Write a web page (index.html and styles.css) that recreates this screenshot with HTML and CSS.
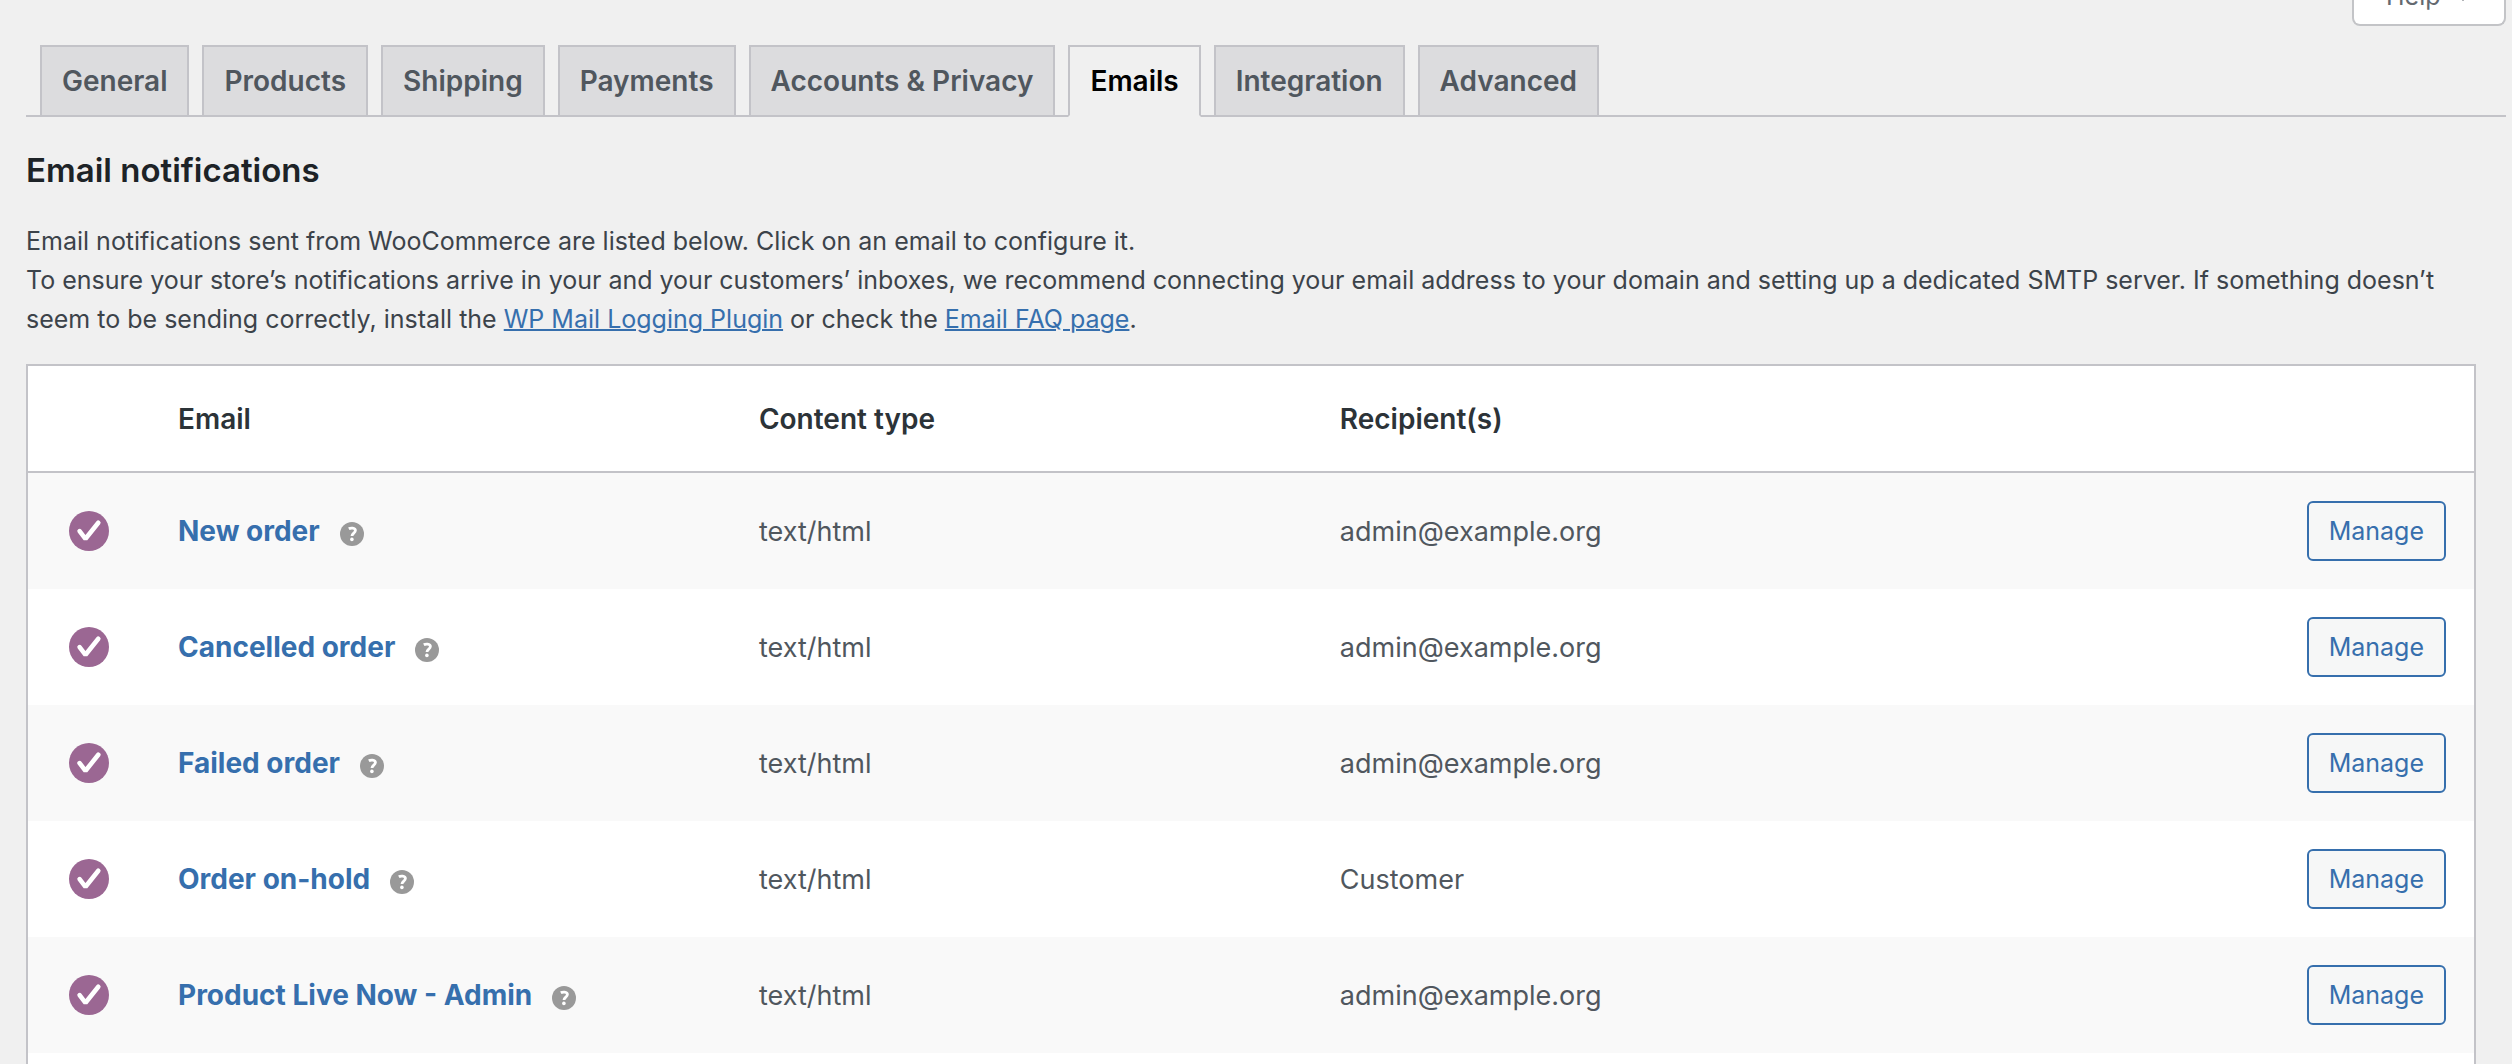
FILE: index.html
```html
<!DOCTYPE html>
<html lang="en">
<head>
<meta charset="utf-8">
<meta name="viewport" content="width=device-width, initial-scale=1">
<title>Email notifications</title>
<link rel="stylesheet" href="styles.css">
</head>
<body>
<svg class="sprite" aria-hidden="true">
  <symbol id="check" viewBox="0 0 40 40">
    <circle cx="20" cy="20" r="20" fill="#9b6793"/>
    <path d="M10.600 20.600 L16.500 28.300 L29.300 12.200" transform="translate(0 -0.500)" fill="none" stroke="currentColor" stroke-width="4.600" stroke-linecap="round" stroke-linejoin="bevel"/>
  </symbol>
  <symbol id="tip" viewBox="0 0 24 24">
    <circle cx="12" cy="12" r="12" fill="#999"/>
    <path d="M8.800 6.700 C10.200 5.900 15.400 5.300 15.400 8.500 C15.400 11 12 11.200 12 14" fill="none" stroke="currentColor" stroke-width="2.800"/>
    <circle cx="11.900" cy="17.400" r="1.800" fill="currentColor"/>
  </symbol>
</svg>

<header class="screen-meta">
  <button type="button" class="help-toggle">Help
    <svg class="arrow" viewBox="0 0 12 6" aria-hidden="true"><path d="M0 0h12L6 6z" fill="currentColor"/></svg>
  </button>
</header>

<main class="page">
  <nav class="tabs" aria-label="Settings sections">
    <a class="tab" href="#general">General</a>
    <a class="tab" href="#products">Products</a>
    <a class="tab" href="#shipping">Shipping</a>
    <a class="tab" href="#payments">Payments</a>
    <a class="tab" href="#accounts">Accounts &amp; Privacy</a>
    <a class="tab tab-active" href="#emails" aria-current="page">Emails</a>
    <a class="tab" href="#integration">Integration</a>
    <a class="tab" href="#advanced">Advanced</a>
  </nav>

  <h2 class="title">Email notifications</h2>
  <p class="intro">Email notifications sent from WooCommerce are listed below. Click on an email to configure it.<br>To ensure your store’s notifications arrive in your and your customers’ inboxes, we recommend connecting your email address to your domain and setting up a dedicated SMTP server. If something doesn’t seem to be sending correctly, install the <a href="#logging">WP Mail Logging Plugin</a> or check the <a href="#faq">Email FAQ page</a>.</p>

  <table class="emails">
    <thead>
      <tr><th class="status"></th><th class="col">Email</th><th class="col">Content type</th><th class="col">Recipient(s)</th><th></th></tr>
    </thead>
    <tbody>
      <tr>
        <td class="status"><svg class="check" role="img" aria-label="Enabled"><use href="#check"/></svg></td>
        <td><div class="name"><a href="#new-order">New order</a><svg class="tip" aria-hidden="true"><use href="#tip"/></svg></div></td>
        <td>text/html</td><td>admin@example.org</td>
        <td class="actions"><a class="manage" href="#new-order">Manage</a></td>
      </tr>
      <tr>
        <td class="status"><svg class="check" role="img" aria-label="Enabled"><use href="#check"/></svg></td>
        <td><div class="name"><a href="#cancelled-order">Cancelled order</a><svg class="tip" aria-hidden="true"><use href="#tip"/></svg></div></td>
        <td>text/html</td><td>admin@example.org</td>
        <td class="actions"><a class="manage" href="#cancelled-order">Manage</a></td>
      </tr>
      <tr>
        <td class="status"><svg class="check" role="img" aria-label="Enabled"><use href="#check"/></svg></td>
        <td><div class="name"><a href="#failed-order">Failed order</a><svg class="tip" aria-hidden="true"><use href="#tip"/></svg></div></td>
        <td>text/html</td><td>admin@example.org</td>
        <td class="actions"><a class="manage" href="#failed-order">Manage</a></td>
      </tr>
      <tr>
        <td class="status"><svg class="check" role="img" aria-label="Enabled"><use href="#check"/></svg></td>
        <td><div class="name"><a href="#on-hold">Order on-hold</a><svg class="tip" aria-hidden="true"><use href="#tip"/></svg></div></td>
        <td>text/html</td><td>Customer</td>
        <td class="actions"><a class="manage" href="#on-hold">Manage</a></td>
      </tr>
      <tr>
        <td class="status"><svg class="check" role="img" aria-label="Enabled"><use href="#check"/></svg></td>
        <td><div class="name"><a href="#live-now">Product Live Now - Admin</a><svg class="tip" aria-hidden="true"><use href="#tip"/></svg></div></td>
        <td>text/html</td><td>admin@example.org</td>
        <td class="actions"><a class="manage" href="#live-now">Manage</a></td>
      </tr>
    </tbody>
  </table>
</main>
</body>
</html>
```
FILE: styles.css
```css
* { box-sizing: border-box; }

body {
  margin: 0;
  background: #f0f0f0;
  color: #3c434a;
  font-family: Inter, "Liberation Sans", sans-serif;
  font-size: 25px;
  line-height: 39px;
}

a { color: #366fad; }

.sprite { display: none; }

/* The help tab hangs from above the top edge */
.screen-meta {
  display: flex;
  justify-content: flex-end;
  align-items: flex-end;
  height: 26px;
  padding-right: 6px;
}

.help-toggle {
  display: flex;
  flex-shrink: 0;
  align-items: center;
  gap: 16px;
  width: 154px;
  height: 60px;
  padding: 2px 0 0 32px;
  border: 2px solid #c3c4c7;
  border-top: 0;
  border-radius: 0 0 8px 8px;
  background: #fff;
  color: #646970;
  font: inherit;
}

.arrow { width: 12px; height: 6px; margin-top: 4px; }

.page { padding: 19px 6px 0 26px; }

.tabs {
  display: flex;
  gap: 13px;
  padding-left: 14px;
  border-bottom: 2px solid #c3c3c8;
}

.tab {
  padding: 10px 20px;
  border: 2px solid #c3c3c8;
  border-bottom: 0;
  background: #dcdcde;
  color: #50575e;
  font-size: 28px;
  font-weight: 600;
  line-height: 48px;
  text-decoration: none;
  white-space: nowrap;
}

.tab-active {
  margin-bottom: -2px;
  border-bottom: 2px solid #f0f0f0;
  background: #f0f0f0;
  color: #000;
}

.title {
  margin: 33px 0 32px;
  color: #1d2327;
  font-size: 33px;
  font-weight: 600;
  line-height: 40px;
}

.intro { margin: 0 16px 25px 0; }

.intro a { text-decoration-thickness: 2px; }

.emails {
  width: calc(100% - 30px);
  border: 2px solid #c3c3c8;
  border-bottom: 0;
  border-spacing: 0;
  background: #fff;
  table-layout: fixed;
  /* room under the last row */
  padding-bottom: 11px;
}

.emails th {
  height: 107px;
  padding: 2px 19px 0;
  border-bottom: 2px solid #c3c3c8;
  color: #2c3338;
  font-size: 28px;
  font-weight: 600;
  text-align: left;
}

.emails td {
  height: 116px;
  padding: 0 19px;
  color: #50575e;
  font-size: 27px;
}

.emails tbody tr:nth-child(odd) { background: #f9f9f9; }

.emails .status { width: 131px; padding: 0 0 0 41px; }

.emails .col { width: 23.75%; }

.check {
  display: block;
  width: 40px;
  height: 40px;
  color: #fff;
}

.name {
  display: flex;
  align-items: center;
  gap: 20px;
  font-size: 28px;
  font-weight: 700;
}

.name a { text-decoration: none; }

.tip {
  width: 24px;
  height: 24px;
  margin-top: 6px;
  color: #fff;
}

.emails .actions { padding: 0 28px; text-align: right; }

.manage {
  display: inline-block;
  padding: 0 20px;
  border: 2px solid #366fad;
  border-radius: 6px;
  background: #f6f7f7;
  font-size: 25px;
  line-height: 56px;
  text-decoration: none;
  vertical-align: middle;
}
```
